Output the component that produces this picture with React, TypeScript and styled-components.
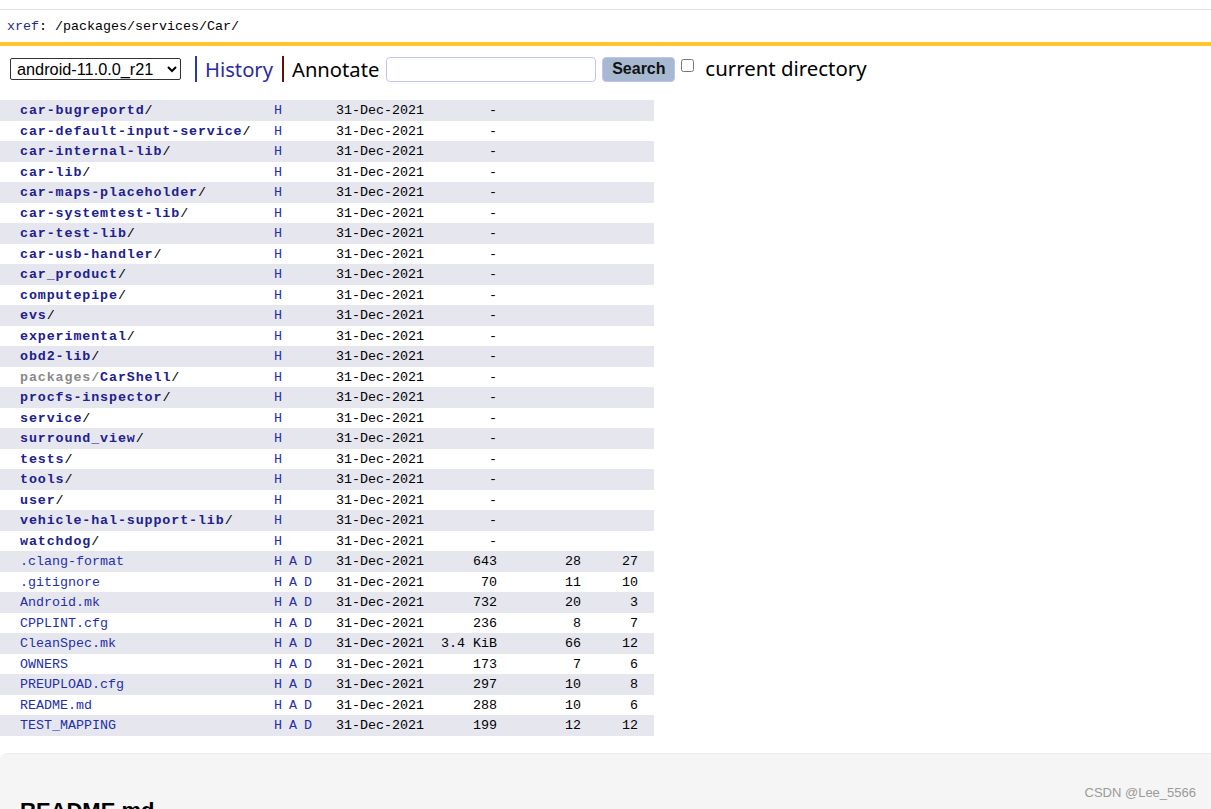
import React from "react";
import styled, { createGlobalStyle } from "styled-components";

const Global = createGlobalStyle`
  html, body { margin: 0; padding: 0; background: #fff; }
  body { font-family: "Liberation Sans", Arial, sans-serif; }
`;

const Page = styled.div`
  position: relative;
  width: 1211px;
  height: 809px;
  overflow: hidden;
  padding-top: 9px;
  box-sizing: border-box;
`;

const Header = styled.div`
  border-top: 1px solid #e2e2e2;
  border-bottom: 4px solid #fec62a;
  height: 32px;
  box-sizing: content-box;
  padding-left: 7px;
  display: flex;
  align-items: center;
  font-family: "Liberation Mono", monospace;
  font-size: 13.33px;
  color: #000;
`;

const XrefLink = styled.span`
  color: #1f2a8a;
`;

const Toolbar = styled.div`
  display: flex;
  align-items: center;
  height: 26px;
  margin-top: 10px;
  padding-left: 10px;
`;

const Select = styled.select`
  height: 22px;
  width: 171px;
  font-family: "Liberation Sans", Arial, sans-serif;
  font-size: 16.3px;
  color: #000;
  border: 1px solid #333;
  border-radius: 2px;
  background: #fff;
  padding: 0 2px;
  margin: 0 14px 0 0;
`;

const NavLink = styled.span<{ $bar: string; $color: string }>`
  border-left: 2px solid ${(p) => p.$bar};
  padding-left: 8px;
  margin-right: 9px;
  font-family: "Noto Sans", "Liberation Sans", sans-serif;
  font-size: 20.2px;
  line-height: 26px;
  color: ${(p) => p.$color};
`;

const SearchInput = styled.input`
  width: 210px;
  height: 25px;
  box-sizing: border-box;
  border: 1px solid #c4c4f4;
  border-radius: 4px;
  margin: 0 6px 0 -2px;
  padding: 0 4px;
`;

const SearchButton = styled.button`
  width: 73px;
  height: 25px;
  box-sizing: border-box;
  background: #a6b9d1;
  border: 1px solid #c4c4f4;
  border-radius: 4px;
  font-family: "Liberation Sans", Arial, sans-serif;
  font-weight: bold;
  font-size: 16px;
  color: #111;
  padding: 0;
`;

const Check = styled.input`
  width: 13px;
  height: 13px;
  margin: 3px 11px 0 6px;
  align-self: flex-start;
`;

const CheckLabel = styled.span`
  font-family: "Noto Sans", "Liberation Sans", sans-serif;
  font-size: 20.4px;
  color: #000;
  margin-top: -2px;
`;

const Table = styled.div`
  margin-top: 18px;
  width: 654px;
  font-family: "Liberation Mono", monospace;
  font-size: 13.33px;
`;

const Row = styled.div<{ $odd: boolean }>`
  display: grid;
  grid-template-columns: 254px 62px 88px 73px 84px 57px;
  padding: 1px 16px 0 20px;
  box-sizing: border-box;
  height: 20.5px;
  align-items: center;
  background: ${(p) => (p.$odd ? "#e6e6ef" : "#fff")};
  color: #000;
  white-space: nowrap;
`;

const DirName = styled.span`
  color: #20208e;
  font-weight: bold;
  letter-spacing: 0.9px;
`;

const ParentPart = styled.span`
  color: #8a8a8a;
  font-weight: bold;
  letter-spacing: 0.9px;
`;

const Slash = styled.span`
  color: #000;
`;

const FileName = styled.span`
  color: #2430a8;
`;

const Had = styled.span`
  color: #2430a8;
  word-spacing: -1px;
`;

const Num = styled.span`
  text-align: right;
`;

const Readme = styled.div`
  margin-top: 17px;
  height: 200px;
  background: #f5f5f5;
  border-top: 1px solid #ececec;
  border-radius: 8px 0 0 0;
  padding: 44px 20px 0;
`;

const ReadmeTitle = styled.h2`
  margin: 0;
  font-family: "Liberation Sans", Arial, sans-serif;
  font-size: 22px;
  font-weight: bold;
  color: #000;
`;

const Watermark = styled.div`
  position: absolute;
  right: 15px;
  top: 785px;
  font-family: "Liberation Sans", Arial, sans-serif;
  font-size: 13px;
  color: #9a9a9a;
`;

type Entry = {
  name: string;
  dir?: boolean;
  parent?: string;
  size?: string;
  lines?: string;
  loc?: string;
};

const entries: Entry[] = [
  { name: "car-bugreportd", dir: true },
  { name: "car-default-input-service", dir: true },
  { name: "car-internal-lib", dir: true },
  { name: "car-lib", dir: true },
  { name: "car-maps-placeholder", dir: true },
  { name: "car-systemtest-lib", dir: true },
  { name: "car-test-lib", dir: true },
  { name: "car-usb-handler", dir: true },
  { name: "car_product", dir: true },
  { name: "computepipe", dir: true },
  { name: "evs", dir: true },
  { name: "experimental", dir: true },
  { name: "obd2-lib", dir: true },
  { name: "CarShell", dir: true, parent: "packages/" },
  { name: "procfs-inspector", dir: true },
  { name: "service", dir: true },
  { name: "surround_view", dir: true },
  { name: "tests", dir: true },
  { name: "tools", dir: true },
  { name: "user", dir: true },
  { name: "vehicle-hal-support-lib", dir: true },
  { name: "watchdog", dir: true },
  { name: ".clang-format", size: "643", lines: "28", loc: "27" },
  { name: ".gitignore", size: "70", lines: "11", loc: "10" },
  { name: "Android.mk", size: "732", lines: "20", loc: "3" },
  { name: "CPPLINT.cfg", size: "236", lines: "8", loc: "7" },
  { name: "CleanSpec.mk", size: "3.4 KiB", lines: "66", loc: "12" },
  { name: "OWNERS", size: "173", lines: "7", loc: "6" },
  { name: "PREUPLOAD.cfg", size: "297", lines: "10", loc: "8" },
  { name: "README.md", size: "288", lines: "10", loc: "6" },
  { name: "TEST_MAPPING", size: "199", lines: "12", loc: "12" },
];

export default function App() {
  return (
    <Page>
      <Global />
      <Header>
        <XrefLink>xref</XrefLink>: /packages/services/Car/
      </Header>
      <Toolbar>
        <Select defaultValue="android-11.0.0_r21">
          <option>android-11.0.0_r21</option>
        </Select>
        <NavLink $bar="#2a3aa8" $color="#2b2b9c">History</NavLink>
        <NavLink $bar="#6a0a0a" $color="#000">Annotate</NavLink>
        <SearchInput type="text" />
        <SearchButton>Search</SearchButton>
        <Check type="checkbox" />
        <CheckLabel>current directory</CheckLabel>
      </Toolbar>
      <Table>
        {entries.map((e, i) => (
          <Row key={e.name} $odd={i % 2 === 0}>
            <span>
              {e.dir ? (
                <>
                  {e.parent && <ParentPart>{e.parent}</ParentPart>}
                  <DirName>{e.name}</DirName>
                  <Slash>/</Slash>
                </>
              ) : (
                <FileName>{e.name}</FileName>
              )}
            </span>
            <Had>{e.dir ? "H" : "H A D"}</Had>
            <span>31-Dec-2021</span>
            <Num>{e.dir ? "-" : e.size}</Num>
            <Num>{e.lines ?? ""}</Num>
            <Num>{e.loc ?? ""}</Num>
          </Row>
        ))}
      </Table>
      <Readme>
        <ReadmeTitle>README.md</ReadmeTitle>
      </Readme>
      <Watermark>CSDN @Lee_5566</Watermark>
    </Page>
  );
}
